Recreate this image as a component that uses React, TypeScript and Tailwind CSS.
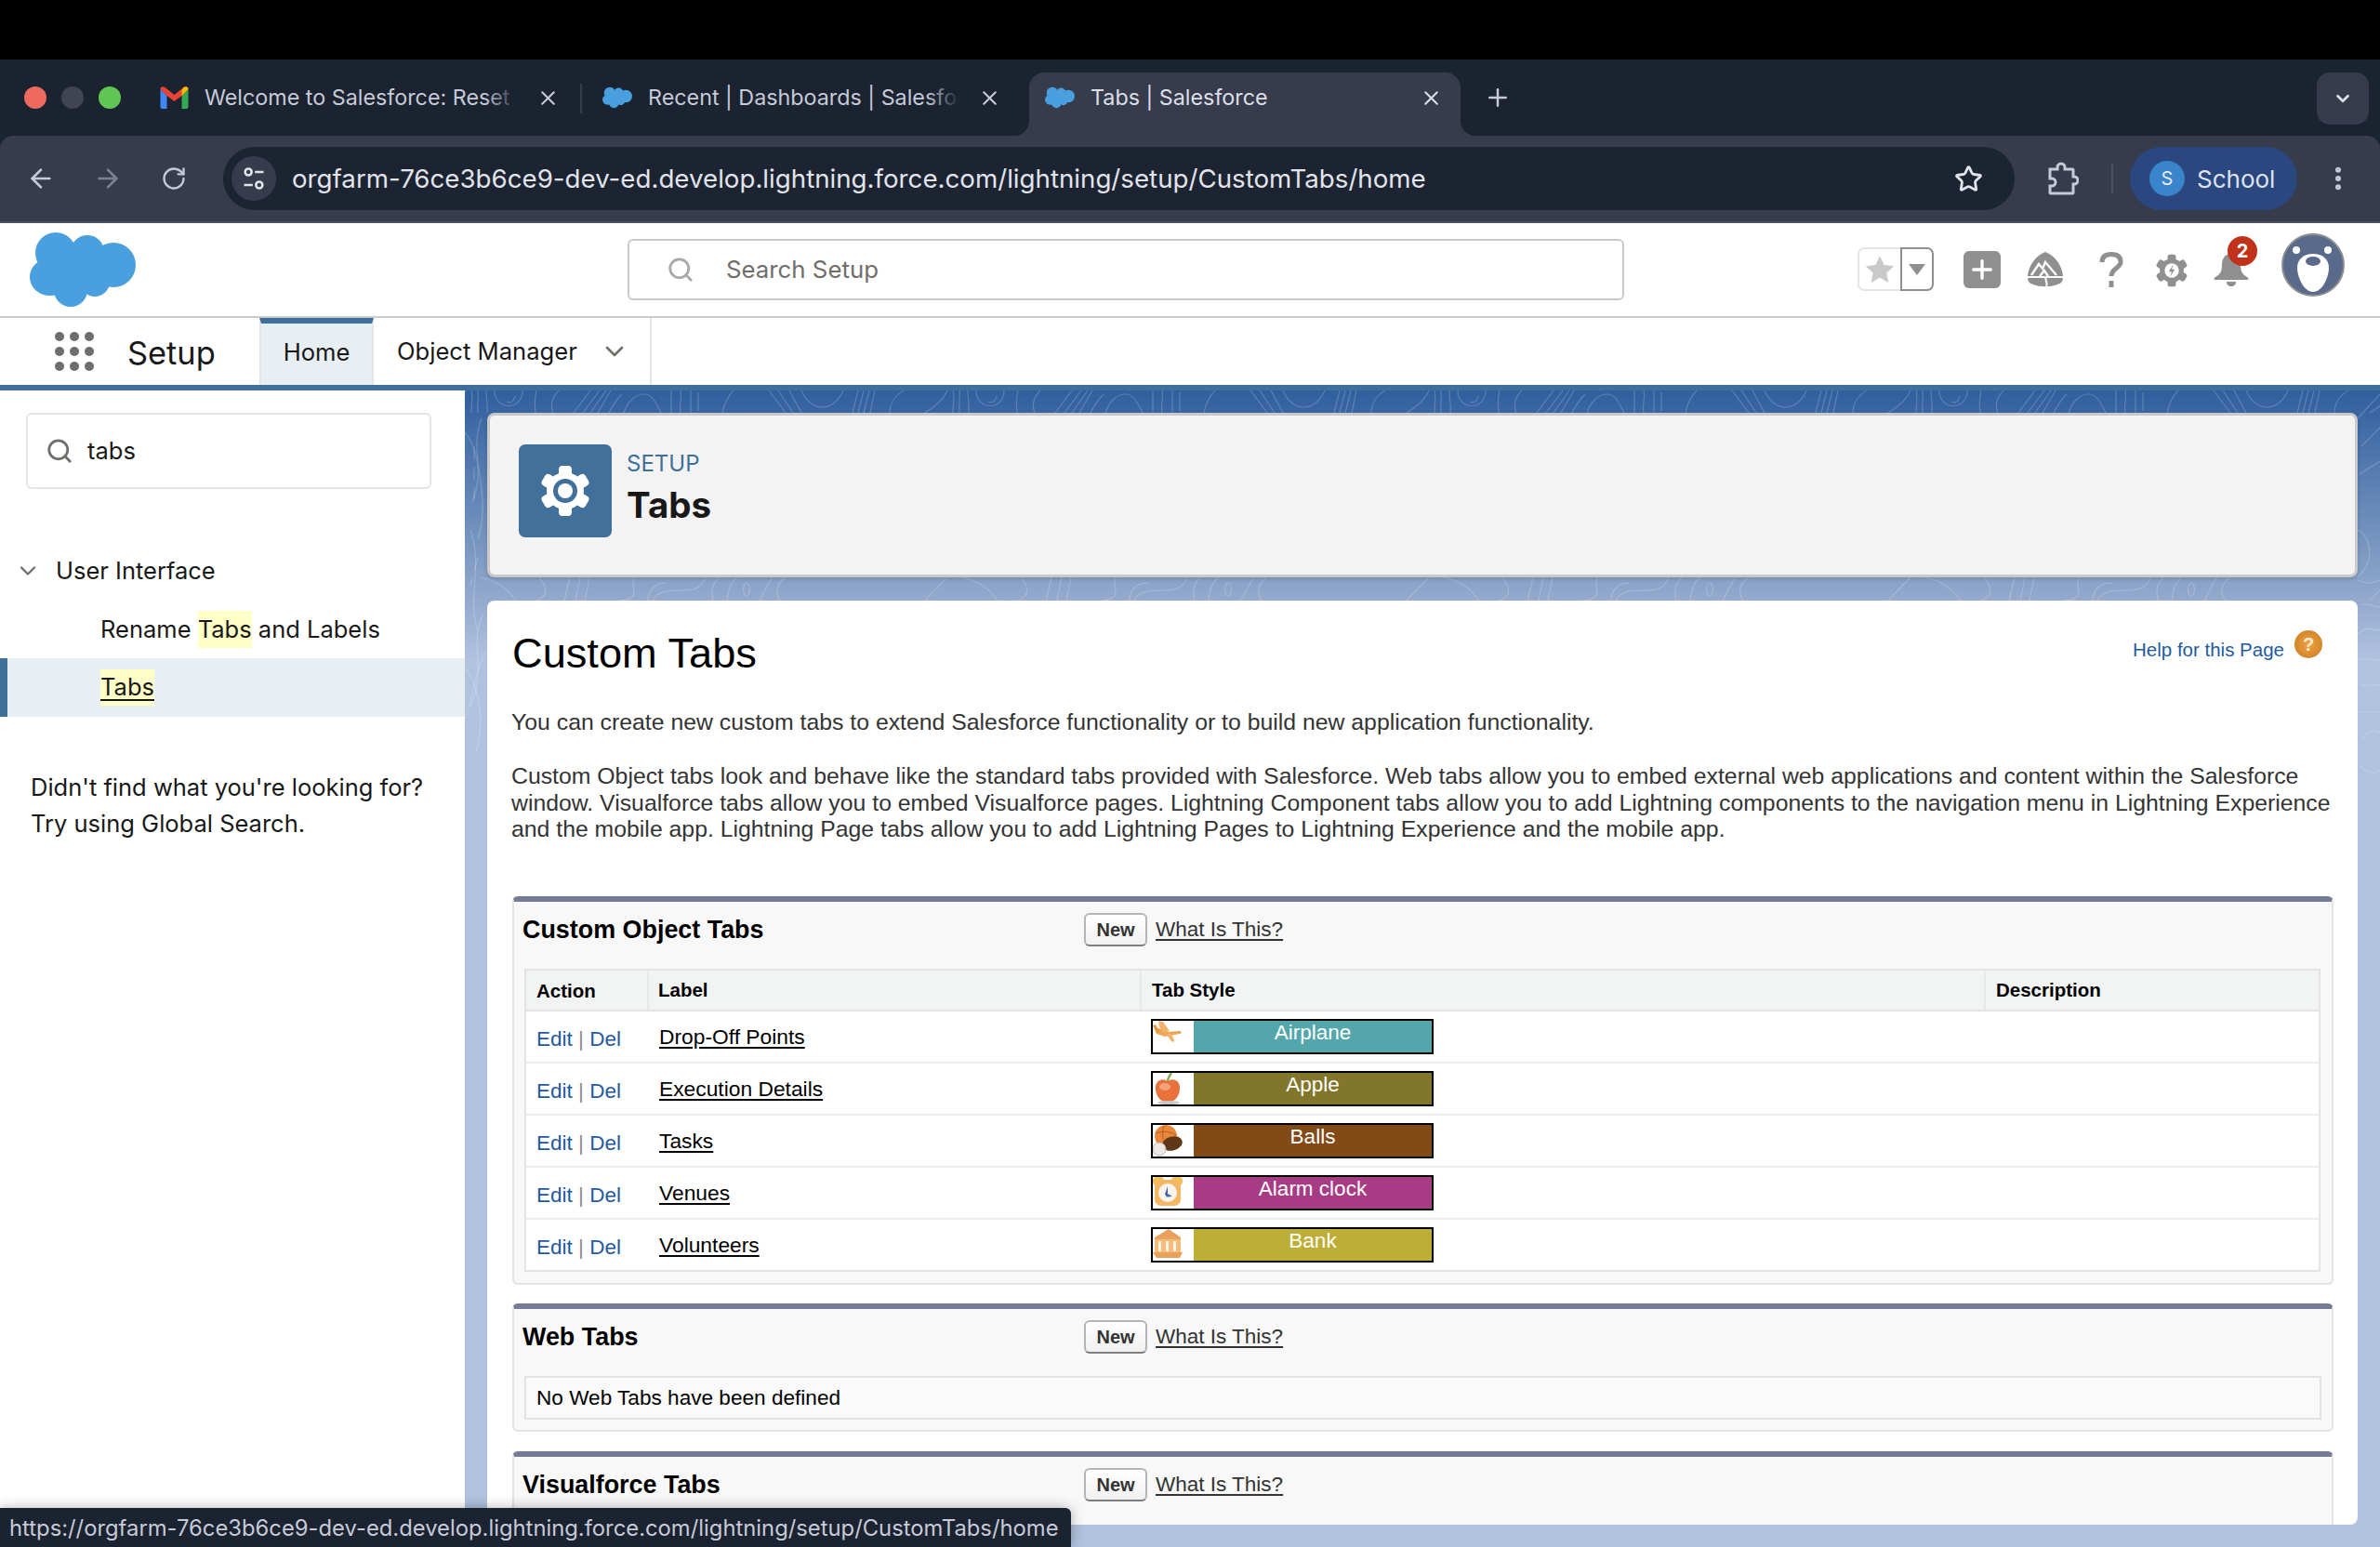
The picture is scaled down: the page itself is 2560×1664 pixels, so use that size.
import { ArrowLeft, ArrowRight, ChevronDown, EllipsisVertical, Plus, RotateCw, Search, Star, X } from 'lucide-react';

const inter = 'font-["Inter",sans-serif]';
const arial = 'font-["Liberation_Sans",Arial,sans-serif]';

function Cloud({ className, color = '#4a9fde' }: { className: string; color?: string }) {
  return (
    <svg viewBox="0 0 114 80" className={className} fill={color}>
      <circle cx="28" cy="22" r="22" />
      <circle cx="62" cy="21" r="18" />
      <circle cx="90" cy="35" r="24" />
      <ellipse cx="22" cy="48" rx="22" ry="20" />
      <circle cx="44" cy="62" r="18" />
      <circle cx="70" cy="53" r="16" />
      <circle cx="55" cy="38" r="24" />
    </svg>
  );
}

function GmailIcon() {
  return (
    <svg viewBox="0 0 30 24" className="w-[31px] h-[24px] shrink-0">
      <path d="M0 3v19c0 1 .8 2 2 2h5V10z" fill="#4285f4" />
      <path d="M30 3v19c0 1-.8 2-2 2h-5V10z" fill="#34a853" />
      <path d="M0 3c0-3 3-3.500 5-2l10 8 10-8c2-1.500 5-1 5 2l-7 7-8 6-8-6z" fill="#ea4335" />
      <path d="M23 4l2-3c2-1.500 5-1 5 2l-7 7z" fill="#fbbc04" />
    </svg>
  );
}

function ChromeTab({ icon, title, className, active, fade }: { icon: React.ReactNode; title: string; className: string; active?: boolean; fade?: boolean }) {
  return (
    <div className={`relative flex items-center h-[68px] pb-[14px] shrink-0 ${active ? 'bg-[#363c4b] rounded-t-[16px]' : ''} ${className}`}>
      {icon}
      <div className={`relative overflow-hidden whitespace-nowrap text-[23.300px] ml-[17px] flex-1 ${active ? 'text-[#dcdfe8]' : 'text-[#c6cad8]'}`}>
        {title}
        {fade && <div className="absolute inset-y-0 right-0 w-[36px] bg-gradient-to-r from-transparent to-[#1b2230]" />}
      </div>
      <X size={25} strokeWidth={2} className={`shrink-0 ${fade ? 'ml-[20px]' : ''} ${active ? 'text-[#dcdfe8]' : 'text-[#c6cad8]'}`} />
      {active && (
        <>
          <div className="absolute bottom-0 -left-[16px] w-[16px] h-[16px] bg-[#363c4b]">
            <div className="w-full h-full bg-[#1b2230] rounded-br-[16px]" />
          </div>
          <div className="absolute bottom-0 -right-[16px] w-[16px] h-[16px] bg-[#363c4b]">
            <div className="w-full h-full bg-[#1b2230] rounded-bl-[16px]" />
          </div>
        </>
      )}
    </div>
  );
}

function BrowserChrome() {
  return (
    <div className={`shrink-0 bg-[#1b2230] ${inter}`}>
      <div className="h-[64px] bg-black" />
      <div className="h-[82px] pt-[14px] flex items-start">
        <div className="w-[172px] h-[54px] shrink-0 flex items-center pl-[26px] gap-[16px]">
          <div className="w-[24px] h-[24px] rounded-full bg-[#ee6a5f]" />
          <div className="w-[24px] h-[24px] rounded-full bg-[#3f4553]" />
          <div className="w-[24px] h-[24px] rounded-full bg-[#61c554]" />
        </div>
        <ChromeTab className="w-[430px]" icon={<GmailIcon />} title="Welcome to Salesforce: Reset" fade />
        <div className="w-[2px] h-[32px] mt-[12px] ml-[22px] bg-[#363c4b]" />
        <ChromeTab className="w-[429px] ml-[22px]" icon={<Cloud className="w-[32px] h-[24px] shrink-0" />} title="Recent | Dashboards | Salesforce" fade />
        <div className="w-[30px] shrink-0" />
        <ChromeTab className="w-[464px] pl-[17px] pr-[19px]" icon={<Cloud className="w-[32px] h-[24px] shrink-0" />} title="Tabs | Salesforce" active />
        <Plus size={30} strokeWidth={2} className="text-[#c6cad8] ml-[25px] mt-[12px]" />
        <div className="ml-auto mr-[12px] w-[56px] h-[56px] rounded-[14px] bg-[#363c4b] flex items-center justify-center">
          <ChevronDown size={22} strokeWidth={3} className="text-[#dcdfe8]" />
        </div>
      </div>
      <div className="h-[94px] bg-[#363c4b] rounded-t-[14px] border-b-2 border-[#4b505d] flex items-center text-[#c6cad8]">
        <ArrowLeft size={32} strokeWidth={2} className="ml-[28px]" />
        <ArrowRight size={32} strokeWidth={2} className="ml-[40px] text-[#7c8290]" />
        <RotateCw size={28} strokeWidth={2} className="ml-[41px]" />
        <div className="ml-[39px] w-[1927px] h-[68px] rounded-full bg-[#1c2331] flex items-center pl-[9px]">
          <div className="w-[48px] h-[48px] rounded-full bg-[#363c4b] flex items-center justify-center">
            <svg viewBox="0 0 24 24" className="w-[28px] h-[28px]" fill="none" stroke="#e2e4ec" strokeWidth="2.200">
              <circle cx="7" cy="6" r="3" />
              <path d="M13 6h8M3 18h8" />
              <circle cx="17" cy="18" r="3" />
            </svg>
          </div>
          <span className="ml-[17px] pt-[2px] text-[27.700px] text-[#e2e4ec] whitespace-nowrap">orgfarm-76ce3b6ce9-dev-ed.develop.lightning.force.com/lightning/setup/CustomTabs/home</span>
          <Star size={31} strokeWidth={2.200} className="ml-auto mr-[34px] text-[#e2e4ec]" />
        </div>
        <svg viewBox="0 0 34 36" className="ml-[35px] w-[34px] h-[36px] shrink-0" fill="none" stroke="#c6cad8" strokeWidth="3">
          <path d="M3 8h8V6a4 4 0 018 0v2h8a1 1 0 011 1v7h1a4 4 0 010 8h-1v9a1 1 0 01-1 1H4a1 1 0 01-1-1v-7h2a4 4 0 000-8H3z" />
        </svg>
        <div className="w-[2px] h-[32px] ml-[35px] bg-[#4b505d]" />
        <div className="ml-[18px] w-[180px] h-[68px] rounded-full bg-[#2a477f] flex items-center pl-[21px]">
          <div className="w-[38px] h-[38px] rounded-full bg-[#3a84cc] flex items-center justify-center text-[20px] text-[#e8ebf3]">S</div>
          <span className="ml-[13px] text-[26px] text-[#dfe3f0]">School</span>
        </div>
        <EllipsisVertical size={32} strokeWidth={2.500} className="ml-[28px]" />
      </div>
    </div>
  );
}

function GearTeeth({ color }: { color: string }) {
  return (
    <g fill={color}>
      {[0, 60, 120, 180, 240, 300].map((a) => (
        <rect key={a} x="21" y="1" width="14" height="14" rx="4" transform={`rotate(${a} 28 28)`} />
      ))}
      <circle cx="28" cy="28" r="20" />
    </g>
  );
}

function SalesforceHeader() {
  return (
    <div className={`h-[102px] shrink-0 bg-white border-b-2 border-[#cccccc] flex items-start ${inter}`}>
      <Cloud className="w-[114px] h-[80px] ml-[32px] mt-[10px] shrink-0" />
      <div className="ml-[529px] mt-[17px] w-[1072px] h-[66px] border-2 border-[#c9c9c9] rounded-[6px] flex items-center pl-[40px] shrink-0">
        <Search size={30} strokeWidth={2.200} className="text-[#a8a8a8]" />
        <span className="ml-[34px] text-[25.800px] text-[#706e6b]">Search Setup</span>
      </div>
      <div className="ml-[251px] mt-[26px] flex h-[47px] w-[82px] shrink-0">
        <div className="w-[46px] border-2 border-r-0 border-[#e5e5e5] rounded-l-[7px] flex items-center justify-center">
          <svg viewBox="0 0 24 24" className="w-[34px] h-[34px]" fill="#c9c9c9">
            <path d="M12 1.500l3.200 7 7.600.800-5.700 5.100 1.600 7.500-6.700-3.800-6.700 3.800 1.600-7.500L1.200 9.300l7.600-.800z" />
          </svg>
        </div>
        <div className="flex-1 border-2 border-[#8f8f8f] rounded-r-[7px] flex items-center justify-center">
          <div className="w-0 h-0 border-x-[9px] border-x-transparent border-t-[12px] border-t-[#8f8f8f]" />
        </div>
      </div>
      <div className="ml-[32px] mt-[30px] w-[40px] h-[40px] rounded-[6px] bg-[#8f8f8f] flex items-center justify-center shrink-0">
        <Plus size={32} strokeWidth={2.500} className="text-white" />
      </div>
      <svg viewBox="0 0 38 38" className="ml-[29px] mt-[31px] w-[38px] h-[38px] shrink-0">
        <path d="M19 0C29 4 37 14 38 26H0C1 14 9 4 19 0z" fill="#8f8f8f" />
        <path d="M0 28h38c-.5 5-3 6-6 7-8 3-18 3-26 0-3-1-5.500-2-6-7z" fill="#8f8f8f" />
        <path d="M4 25l8-12 4 5 3-7 12 14M13 26l5-6 4 6" fill="none" stroke="#fff" strokeWidth="2.400" />
        <path d="M18 27c3 2 1 3 2 5s1 3 0 6" fill="none" stroke="#fff" strokeWidth="2" />
      </svg>
      <svg viewBox="0 0 26 38" className="ml-[39px] mt-[31px] w-[26px] h-[38px] shrink-0" fill="none">
        <path d="M3 11C3 5 7 2.500 13 2.500S23 5 23 11c0 6-10 7-10 15" stroke="#8f8f8f" strokeWidth="5" />
        <rect x="10.500" y="31" width="5" height="7" fill="#8f8f8f" />
      </svg>
      <svg viewBox="0 0 56 56" className="ml-[34px] mt-[32px] w-[36px] h-[38px] shrink-0">
        <GearTeeth color="#8f8f8f" />
        <circle cx="28" cy="28" r="12" fill="#fff" />
        <path d="M31 17l-8 13h5l-3 9 8-13h-5z" fill="#8f8f8f" />
      </svg>
      <div className="relative ml-[27px] mt-[32px] w-[38px] h-[36px] shrink-0">
        <svg viewBox="0 0 38 36" className="w-[38px] h-[36px]" fill="#8f8f8f">
          <path d="M19 1c7 0 10 5 10 12 0 7 2 10 7 13 2 1 2 3 0 3H2c-2 0-2-2 0-3 5-3 7-6 7-13C9 6 12 1 19 1z" />
          <path d="M14 31h10c0 3-2 5-5 5s-5-2-5-5z" />
        </svg>
        <div className="absolute -top-[18px] -right-[9px] w-[32px] h-[32px] rounded-full bg-[#c23119] text-white font-bold text-[20px] flex items-center justify-center">2</div>
      </div>
      <svg viewBox="0 0 68 68" className="ml-[35px] mt-[11px] w-[68px] h-[68px] shrink-0">
        <circle cx="34" cy="34" r="33" fill="#5a6a8a" stroke="#8f8f8f" strokeWidth="2" />
        <circle cx="16" cy="18" r="4" fill="#fff" />
        <circle cx="50" cy="18" r="4" fill="#fff" />
        <path d="M34 22c10 0 17 6 17 15 0 10-7 26-17 26S17 47 17 37c0-9 7-15 17-15z" fill="#fff" />
        <ellipse cx="34" cy="30" rx="8" ry="5" fill="#5a6a8a" />
      </svg>
    </div>
  );
}

function NavBar() {
  return (
    <div className={`h-[78px] shrink-0 bg-white border-b-[6px] border-[#3f7099] flex items-stretch ${inter}`}>
      <div className="ml-[59px] w-[42px] self-center grid grid-cols-3 gap-[6px] shrink-0">
        {[1, 2, 3, 4, 5, 6, 7, 8, 9].map((n) => (
          <div key={n} className="w-[10px] h-[10px] rounded-full bg-[#706e6b]" />
        ))}
      </div>
      <div className="ml-[36px] w-[142px] self-center pt-[3px] text-[34.400px] text-[#181818] shrink-0">Setup</div>
      <div className="w-[123px] shrink-0 bg-[#e8eff3] border-t-[6px] border-x-2 border-t-[#3f7099] border-x-[#e2e6e9] flex items-center justify-center pb-[3px] text-[25.600px] text-[#181818]">Home</div>
      <div className="w-[299px] shrink-0 border-r-2 border-[#e2e6e9] flex items-center pl-[25px] text-[25.600px] text-[#181818]">
        Object Manager
        <ChevronDown size={32} strokeWidth={2} className="ml-[24px] text-[#706e6b]" />
      </div>
    </div>
  );
}

function Sidebar() {
  return (
    <div className={`w-[500px] shrink-0 bg-white text-[#181818] text-[25.500px] ${inter}`}>
      <div className="mt-[24px] ml-[28px] w-[436px] h-[82px] border-2 border-[#e5e5e5] rounded-[6px] flex items-center pl-[19px]">
        <Search size={30} strokeWidth={2.200} className="text-[#706e6b]" />
        <span className="ml-[15px]">tabs</span>
      </div>
      <div className="mt-[66px] h-[44px] flex items-center pl-[16px]">
        <ChevronDown size={28} strokeWidth={2} className="text-[#706e6b]" />
        <span className="ml-[16px]">User Interface</span>
      </div>
      <div className="mt-[19px] h-[44px] flex items-center pl-[108px] whitespace-pre">
        Rename <span className="bg-[#ffffc7] py-[1px]">Tabs</span> and Labels
      </div>
      <div className="mt-[9px] h-[63px] bg-[#e8eff3] border-l-[8px] border-[#3f7099] flex items-center pl-[100px]">
        <span className="bg-[#ffffc7] underline underline-offset-[4px]">Tabs</span>
      </div>
      <div className="mt-[56px] pl-[33px] leading-[39px]">
        Didn't find what you're looking for?
        <br />
        Try using Global Search.
      </div>
    </div>
  );
}

const motifOffsets = [-23, 495, 1013, 1531, 2049];

function Contours() {
  return (
    <svg className="absolute inset-0 w-full h-full" viewBox="0 0 2060 1244" fill="none" stroke="#ffffff" strokeOpacity="0.2" strokeWidth="1.200">
      {motifOffsets.map((x) => (
        <g key={x} transform={`translate(${x} 0)`}>
          <path d="M0 24C10 18 20 10 24 0M30 0c2 8 0 16 0 24M37 0c1 8-1 16 0 24M46 0c0 10 2 16 1 24M55 0C55 22 85 22 85 0M68 12c4 2 8 0 9-6M100 0c-2 8-2 16-1 24M118 24C114 14 118 6 124 0" />
          <path d="M140 24L158 0M150 24L168 0M158 24L175 0M166 24L180 0M178 24c4-8 8-14 14-20M194 24c4-12 12-20 22-20 8 0 12 8 18 20M245 0v24M255 0c2 8-2 16 0 24M266 0v24" />
          <path d="M274 2v20M300 24C302 14 306 6 312 0M350 0L368 24M360 0L376 24M372 0L385 24M385 0C395 24 420 24 430 0" />
          <path d="M440 24L446 0M446 24L452 0M452 24L458 0M459 24L464 0M480 24C480 12 488 4 495 0" />
          <path d="M0 226C10 215 20 205 24 201M40 201C60 205 70 215 78 226M100 226C115 220 110 210 103 201M130 226L136 201M142 226L147 201M152 226L157 201M190 226C215 224 200 210 205 201M220 226C220 210 235 205 240 208" />
          <path d="M225 226C235 205 270 225 280 205L282 201M290 226C288 215 288 210 296 201M305 226C306 215 310 205 316 201M340 226C346 215 350 205 354 201" />
          <ellipse cx="326" cy="214" rx="3.500" ry="7" />
          <path d="M362 226c-6-10-4-18 6-25" />
        </g>
      ))}
      <path d="M-4 40C14 60 20 90 8 120M18 30C2 70 30 110 14 160M6 150C20 190 2 220 14 260M20 240C4 270 24 300 6 340" />
      <path d="M10 60V120M14 180l-8 30" strokeDasharray="14 8" />
      <path d="M2 300C14 320 22 350 12 390M24 280C8 300 10 340 -4 360" />
      <path d="M2040 230C2050 228 2056 236 2064 232M2036 262C2050 250 2056 262 2064 256M2036 290c10-6 18 4 28-2M2038 316c8 4 16-2 26 2M2036 346h28M2040 376c8-14 18-10 24-6M2038 404c10 8 18 10 26 2" />
      <path d="M2036 30L2060 4M2040 60L2060 40M2038 90L2060 76M2036 150c16 8 18 36 0 50M2036 204c8 4 16 4 24 0" />
    </svg>
  );
}

const styleIcons: Record<string, React.ReactNode> = {
  Airplane: (
    <svg viewBox="0 0 32 26" className="w-[32px] h-[26px] blur-[0.5px]">
      <path d="M2 9l5-1 9 4 12-1c3 0 4 2 1 3l-11 2-5 1-9-3z" fill="#eea653" />
      <path d="M6 0l5 1 7 10-7 2-4-7zM14 14l6 0 3 7c1 2-2 2-3 1z" fill="#f0b26c" />
      <path d="M0 5l3-1 4 7-3 2z" fill="#e9984a" />
    </svg>
  ),
  Apple: (
    <svg viewBox="0 0 32 34" className="w-[32px] h-[34px] blur-[0.5px]">
      <path d="M16 9C22 5 30 8 29 18c-1 9-7 14-13 13C10 32 4 27 3 18 2 8 10 5 16 9z" fill="#e8713c" />
      <ellipse cx="13" cy="15" rx="6" ry="4" fill="#f4a27c" />
      <path d="M16 9c0-3 2-6 4-9" stroke="#7fae55" strokeWidth="2.500" fill="none" />
      <ellipse cx="17" cy="32" rx="12" ry="2" fill="#c9c9c9" />
    </svg>
  ),
  Balls: (
    <svg viewBox="0 0 32 34" className="w-[32px] h-[34px] blur-[0.5px]">
      <circle cx="14" cy="12" r="12" fill="#e9873a" />
      <path d="M3 9c8-3 16-2 22 2M12 1c-2 6-2 12 1 20" stroke="#b85d1c" strokeWidth="1" fill="none" />
      <ellipse cx="21" cy="20" rx="11" ry="7.500" fill="#5d3717" transform="rotate(-15 21 20)" />
      <circle cx="7" cy="26" r="7" fill="#ece9e7" stroke="#b7b3b0" strokeWidth="1" />
    </svg>
  ),
  'Alarm clock': (
    <svg viewBox="0 0 32 32" className="w-[32px] h-[32px] blur-[0.5px]">
      <rect x="0" y="0" width="12" height="9" rx="4" fill="#f1c25c" />
      <rect x="20" y="0" width="12" height="9" rx="4" fill="#f1c25c" />
      <rect x="2" y="3" width="28" height="28" rx="7" fill="#f3b765" />
      <circle cx="16" cy="17" r="10" fill="#fbf4ea" />
      <path d="M16 10v8l5 3-6 .5-2-3z" fill="#3f66a8" />
    </svg>
  ),
  Bank: (
    <svg viewBox="0 0 32 32" className="w-[32px] h-[32px] blur-[0.5px]">
      <path d="M17 0l13 9v3H2V9z" fill="#e9a05a" />
      <rect x="2" y="11" width="28" height="15" fill="#f4bb7a" />
      <path d="M6 13h3v11H6zM14 13h3v11h-3zM22 13h3v11h-3z" fill="#fff2e0" />
      <path d="M0 25h32l-3 6H4z" fill="#e9a05a" />
    </svg>
  ),
};

const objectTabs = [
  { label: 'Drop-Off Points', style: 'Airplane', color: 'bg-[#53a7aa]' },
  { label: 'Execution Details', style: 'Apple', color: 'bg-[#82762a]' },
  { label: 'Tasks', style: 'Balls', color: 'bg-[#824a17]' },
  { label: 'Venues', style: 'Alarm clock', color: 'bg-[#a83c84]' },
  { label: 'Volunteers', style: 'Bank', color: 'bg-[#bcae36]' },
];

function SectionHead({ title }: { title: string }) {
  return (
    <div className="h-[60px] flex items-center">
      <div className="w-[613px] pl-[9px] font-bold text-[26.900px] text-black shrink-0">{title}</div>
      <button className="w-[68px] h-[36px] border-2 border-[#b5b5b5] border-b-[#7f7f7f] rounded-[6px] bg-gradient-to-b from-white to-[#f1f1f1] text-[20px] font-bold text-[#333333]">New</button>
      <a className="ml-[9px] text-[22.500px] text-[#333333] underline underline-offset-[3px]">What Is This?</a>
    </div>
  );
}

function CustomObjectSection() {
  return (
    <div className="border-t-[6px] border-x-2 border-b-2 border-t-[#747d95] border-x-[#e3e3e3] border-b-[#e3e3e3] rounded-[6px] bg-[#f8f8f8]">
      <SectionHead title="Custom Object Tabs" />
      <div className="mt-[12px] ml-[11px] mr-[12px] mb-[12px] border-2 border-[#e3e3e3] bg-white text-[22.500px]">
        <div className="h-[44px] flex items-stretch bg-[#f2f3f3] border-b-2 border-[#e3e3e3] font-bold text-[20.500px] text-black">
          <div className="w-[132px] pl-[11px] pt-[4px] flex items-center border-r-2 border-[#e8e9e9]">Action</div>
          <div className="w-[530px] pl-[10px] pt-[1px] flex items-center border-r-2 border-[#e8e9e9]">Label</div>
          <div className="w-[908px] pl-[11px] pt-[1px] flex items-center border-r-2 border-[#e8e9e9]">Tab Style</div>
          <div className="flex-1 pl-[11px] pt-[1px] flex items-center">Description</div>
        </div>
        {objectTabs.map((t, i) => (
          <div key={t.label} className={`flex items-center ${i < 4 ? 'h-[56px] border-b-2 border-[#ececec]' : 'h-[54px]'}`}>
            <div className="w-[132px] pl-[11px] pt-[6px] text-[#1f5aa0]">
              Edit <span className="text-[#8a8a8a]">|</span> Del
            </div>
            <div className="w-[530px] pl-[11px] text-black text-[22.800px]">
              <a className="underline underline-offset-[3px]">{t.label}</a>
            </div>
            <div className="w-[304px] ml-[10px] h-[38px] border-2 border-black flex bg-white">
              <div className="w-[44px] shrink-0 overflow-hidden">{styleIcons[t.style]}</div>
              <div className={`flex-1 pb-[7px] flex items-center justify-center text-white ${t.color}`}>{t.style}</div>
            </div>
          </div>
        ))}
      </div>
    </div>
  );
}

function MainPanel() {
  return (
    <div className="flex-1 relative overflow-hidden bg-[linear-gradient(180deg,#2f5f9e_0px,#91a8cc_220px,#b0c2de_290px)] px-[24px] pt-[24px]">
      <Contours />
      <div className={`relative h-[177px] bg-[#f3f3f3] border-[3px] border-[#c9c9c9] rounded-[8px] shadow-[0_2px_4px_rgba(0,0,0,0.15)] flex items-start pl-[31px] pt-[31px] ${inter}`}>
        <div className="w-[100px] h-[100px] rounded-[7px] bg-[#41719b] flex items-center justify-center">
          <svg viewBox="0 0 56 56" className="w-[56px] h-[56px]">
            <GearTeeth color="#ffffff" />
            <circle cx="28" cy="28" r="13" fill="#41719b" />
            <circle cx="28" cy="28" r="8" fill="#ffffff" />
          </svg>
        </div>
        <div className="ml-[16px]">
          <div className="text-[24px] leading-[30px] mt-[6px] text-[#3f7099]">SETUP</div>
          <div className="text-[38.500px] leading-[48px] mt-[5px] font-bold text-[#181818]">Tabs</div>
        </div>
      </div>
      <div className={`relative mt-[25px] h-[994px] overflow-hidden bg-white rounded-[8px] pt-[32px] px-[26px] ${arial}`}>
        <div className="flex justify-between items-start pr-[12px]">
          <h1 className="pl-[1px] text-[45.200px] leading-[50px] text-black">Custom Tabs</h1>
          <div className="flex items-start">
            <a className="mt-[6px] text-[20.500px] text-[#1f5aa0]">Help for this Page</a>
            <div className="ml-[11px] w-[30px] h-[30px] rounded-full bg-radial from-[#eba544] to-[#c9781c] flex items-center justify-center text-[#fdebd0] font-bold text-[20px]">?</div>
          </div>
        </div>
        <p className="mt-[34px] text-[24.800px] leading-[29px] text-[#333333]">
          You can create new custom tabs to extend Salesforce functionality or to build new application functionality.
        </p>
        <p className="mt-[30px] text-[24.800px] leading-[28.600px] text-[#333333] whitespace-nowrap">
          Custom Object tabs look and behave like the standard tabs provided with Salesforce. Web tabs allow you to embed external web applications and content within the Salesforce
          <br />
          window. Visualforce tabs allow you to embed Visualforce pages. Lightning Component tabs allow you to add Lightning components to the navigation menu in Lightning Experience
          <br />
          and the mobile app. Lightning Page tabs allow you to add Lightning Pages to Lightning Experience and the mobile app.
        </p>
        <div className="mt-[57px] ml-[1px] w-[1959px]">
          <CustomObjectSection />
          <div className="mt-[20px] border-t-[6px] border-x-2 border-b-2 border-t-[#747d95] border-x-[#e3e3e3] border-b-[#e3e3e3] rounded-[6px] bg-[#f8f8f8]">
            <SectionHead title="Web Tabs" />
            <div className="mt-[12px] mx-[11px] mb-[11px] h-[47px] border-2 border-[#e3e3e3] bg-[#fafafa] flex items-center pl-[11px] pt-[1px] text-[22.600px] text-black">No Web Tabs have been defined</div>
          </div>
          <div className="mt-[21px] border-t-[6px] border-x-2 border-b-2 border-t-[#747d95] border-x-[#e3e3e3] border-b-[#e3e3e3] rounded-[6px] bg-[#f8f8f8] h-[200px]">
            <SectionHead title="Visualforce Tabs" />
          </div>
        </div>
      </div>
    </div>
  );
}

export default function App() {
  return (
    <div className="relative w-[2560px] h-[1664px] overflow-hidden flex flex-col bg-white">
      <BrowserChrome />
      <SalesforceHeader />
      <NavBar />
      <div className="flex h-[1244px]">
        <Sidebar />
        <MainPanel />
      </div>
      <div className={`absolute left-0 bottom-0 w-[1152px] h-[42px] bg-[#1b2230] rounded-tr-[6px] shadow-[0_0_14px_rgba(0,0,0,0.3)] flex items-center pl-[10px] pt-[2px] text-[23.800px] text-[#c6cad8] whitespace-nowrap ${inter}`}>
        https://orgfarm-76ce3b6ce9-dev-ed.develop.lightning.force.com/lightning/setup/CustomTabs/home
      </div>
    </div>
  );
}
